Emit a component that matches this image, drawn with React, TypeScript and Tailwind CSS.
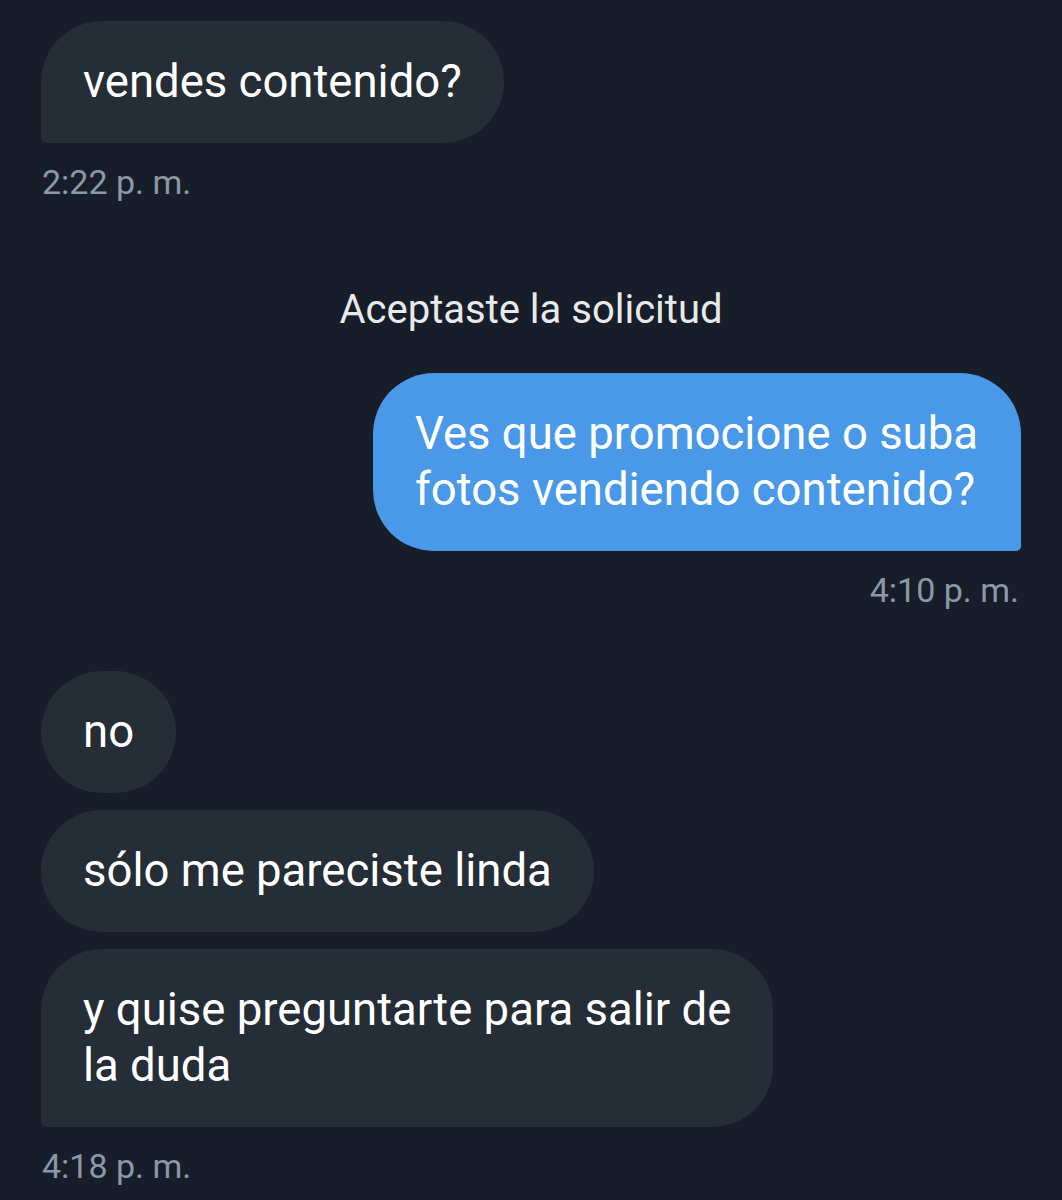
const Incoming = ({ text, square }: { text: React.ReactNode; square?: boolean }) => (
  <div
    className={`self-start bg-[#252d36] text-white text-[45.5px] leading-[56px] px-[42px] py-[33px] rounded-[61px] ${
      square ? "rounded-bl-[5px]" : ""
    }`}
  >
    {text}
  </div>
);

const Stamp = ({ t, right }: { t: string; right?: boolean }) => (
  <p className={`text-[34px] leading-[40px] text-[#8b98a5] mt-[19px] ${right ? "text-right pr-[2px]" : "pl-[1px]"}`}>{t}</p>
);

export default function App() {
  return (
    <div
      className="w-[1062px] h-[1200px] bg-[#171e29] overflow-hidden px-[41px] pt-[21px] flex flex-col"
      style={{ fontFamily: "Roboto, 'Liberation Sans', sans-serif" }}
    >
      <Incoming text="vendes contenido?" square />
      <Stamp t="2:22 p. m." />

      <p className="text-center text-[40px] leading-[40px] text-[#e7e9ea] mt-[88px]">Aceptaste la solicitud</p>

      <div className="self-end mt-[43px] bg-[#4a99e8] text-white text-[45.5px] leading-[56px] pl-[42px] pr-[43px] py-[33px] rounded-[61px] rounded-br-[5px]">
        Ves que promocione o suba
        <br />
        fotos vendiendo contenido?
      </div>
      <Stamp t="4:10 p. m." right />

      <div className="flex flex-col gap-[17px] mt-[61px]">
        <Incoming text="no" />
        <Incoming text="sólo me pareciste linda" />
        <Incoming
          text={
            <>
              y quise preguntarte para salir de
              <br />
              la duda
            </>
          }
          square
        />
      </div>
      <Stamp t="4:18 p. m." />
    </div>
  );
}
